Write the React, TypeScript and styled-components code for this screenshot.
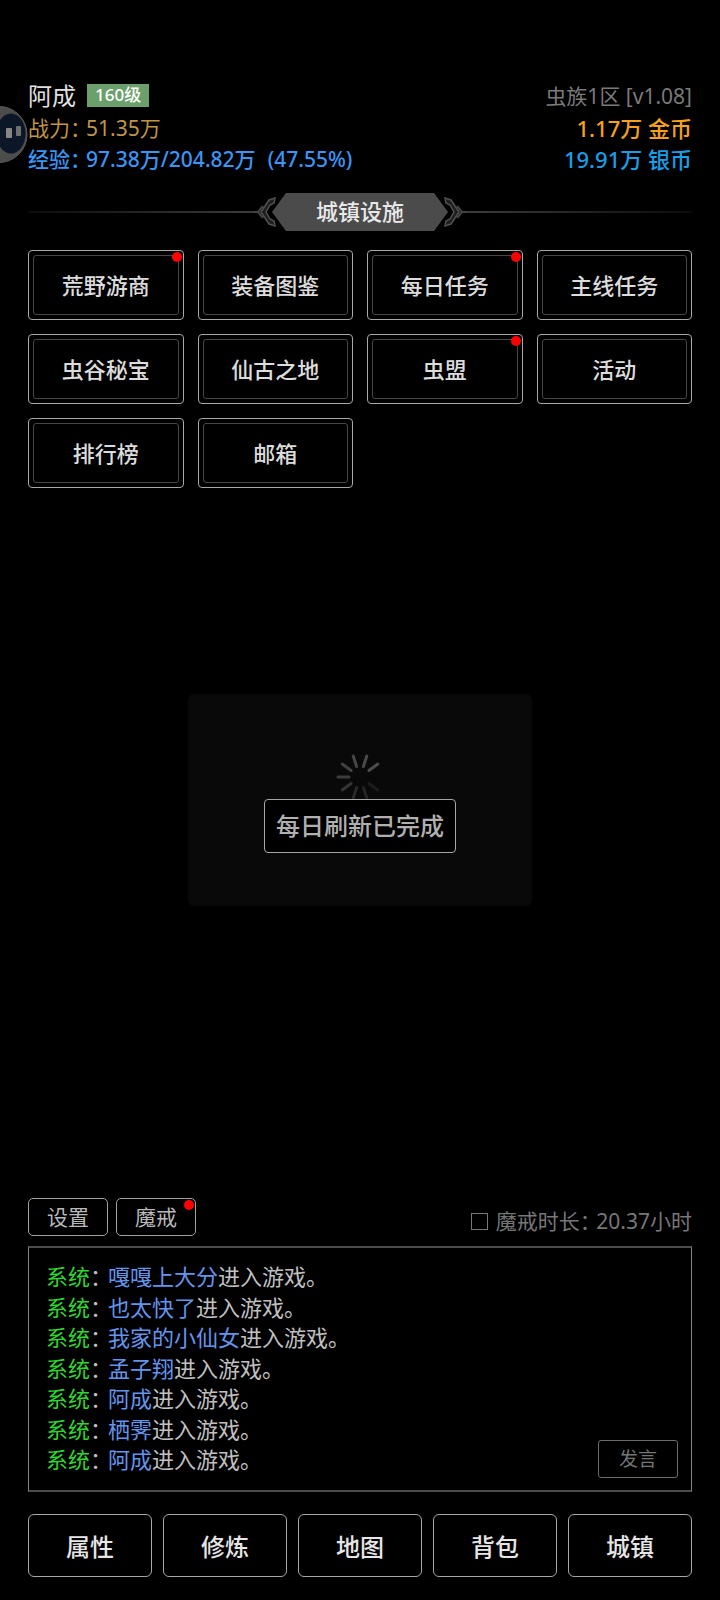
import React from "react";
import styled, { createGlobalStyle } from "styled-components";

const Global = createGlobalStyle`
  *, *::before, *::after { box-sizing: border-box; }
  body {
    margin: 0;
    background: #000;
    color: #d9d9d9;
    font-family: "Noto Sans", "Noto Sans CJK SC", sans-serif;
  }
  button { font-family: inherit; background: #000; cursor: pointer; padding: 0; }
`;

const Page = styled.div`
  min-height: 100vh;
  display: flex;
  flex-direction: column;
  padding: 79px 28px 23px;
`;

const Header = styled.header`
  display: flex;
  justify-content: space-between;
  white-space: nowrap;
`;

const Column = styled.div<{ $end?: boolean }>`
  display: flex;
  flex-direction: column;
  align-items: ${(p) => (p.$end ? "flex-end" : "flex-start")};
`;

const Line = styled.div<{ $color: string; $size?: number; $weight?: number; $tall?: boolean }>`
  display: flex;
  align-items: center;
  height: ${(p) => (p.$tall ? 33 : 31)}px;
  line-height: 30px;
  font-size: ${(p) => p.$size ?? 21}px;
  font-weight: ${(p) => p.$weight ?? 400};
  color: ${(p) => p.$color};
`;

const Level = styled.span`
  margin-left: 11px;
  padding: 0 8px;
  height: 23px;
  line-height: 22px;
  background: #6b9f6b;
  color: #fff;
  font-size: 17px;
  font-weight: 500;
`;

const StatLabel = styled.span`
  width: 58px;
  font-feature-settings: "halt";
`;

const Percent = styled.span`
  margin-left: 12px;
`;

const Title = styled.h1`
  display: flex;
  align-items: center;
  margin: 19px 0;
  height: 38px;
  font-size: 22px;
  font-weight: 500;
`;

const Rule = styled.span<{ $flip?: boolean }>`
  flex: 1;
  height: 2px;
  background: linear-gradient(${(p) => (p.$flip ? "to left" : "to right")}, #0c0c0c, #3c3c3c);
`;

const Ornament = styled.svg<{ $flip?: boolean }>`
  width: 24px;
  height: 32px;
  flex: none;
  margin: ${(p) => (p.$flip ? "0 0 0 -6px" : "0 -6px 0 0")};
  transform: ${(p) => (p.$flip ? "scaleX(-1)" : "none")};
`;

const Plate = styled.span`
  width: 176px;
  height: 38px;
  line-height: 36px;
  text-align: center;
  background: #4b4b4b;
  color: #e8e8e8;
  clip-path: polygon(14px 0, calc(100% - 14px) 0, 100% 50%, calc(100% - 14px) 100%, 14px 100%, 0 50%);
`;

const Facilities = styled.main`
  display: grid;
  grid-template-columns: repeat(4, 1fr);
  gap: 14px;
`;

const FacilityButton = styled.button`
  position: relative;
  height: 70px;
  padding: 4px;
  border: 1px solid #a8a8a8;
  border-radius: 4px;
  color: #dcdcdc;
  font-size: 22px;
  font-weight: 500;
`;

const Inner = styled.span`
  display: flex;
  height: 100%;
  padding-bottom: 2px;
  align-items: center;
  justify-content: center;
  border: 1px solid #464646;
  border-radius: 3px;
`;

const Dot = styled.i`
  position: absolute;
  top: 1px;
  right: 1px;
  width: 10px;
  height: 10px;
  border-radius: 50%;
  background: #f00;
`;

const Footer = styled.footer`
  margin-top: auto;
`;

const Tools = styled.div`
  display: flex;
  gap: 8px;
  margin-bottom: 10px;
`;

const SmallButton = styled.button<{ $dim?: boolean }>`
  position: relative;
  width: 80px;
  height: 38px;
  flex: none;
  padding-bottom: 2px;
  border: 1px solid ${(p) => (p.$dim ? "#6c6c6c" : "#a0a0a0")};
  border-radius: ${(p) => (p.$dim ? 3 : 5)}px;
  color: ${(p) => (p.$dim ? "#757575" : "#b8b8b8")};
  font-size: ${(p) => (p.$dim ? 19 : 21)}px;
`;

const Duration = styled.label`
  margin-left: auto;
  display: flex;
  align-items: center;
  height: 30px;
  align-self: flex-end;
  color: #777;
  font-size: 21px;
  line-height: 30px;
`;

const DurationName = styled.span`
  margin-right: 6px;
  font-feature-settings: "halt";
`;

const Check = styled.input`
  appearance: none;
  width: 17px;
  height: 17px;
  margin: 0 8px 0 0;
  border: 1px solid #777;
`;

const Chat = styled.section`
  display: flex;
  align-items: flex-end;
  min-height: 246px;
  padding: 13px 13px 12px 17px;
  border: solid #4d4d4d;
  border-width: 2px 1px;
  border-left-color: #858585;
  border-right-color: #858585;
`;

const Messages = styled.ul`
  flex: 1;
  align-self: stretch;
  display: flex;
  flex-direction: column;
  justify-content: space-between;
  margin: 0;
  padding: 0 0 4px;
  list-style: none;
  font-size: 22px;
  line-height: 30px;
  color: #c0c0c0;
`;

const Message = styled.li`
  display: flex;
  white-space: nowrap;
`;

const Sender = styled.span`
  width: 62px;
  font-feature-settings: "halt";
`;

const System = styled.span`
  color: #2fd62f;
`;

const Player = styled.a`
  color: #6495ed;
  text-decoration: none;
`;

const Nav = styled.nav`
  display: grid;
  grid-template-columns: repeat(5, 1fr);
  gap: 11px;
  margin-top: 22px;
`;

const NavButton = styled.button`
  height: 63px;
  border: 1px solid #a8a8a8;
  border-radius: 6px;
  color: #e6e6e6;
  font-size: 24px;
  font-weight: 500;
`;

const Overlay = styled.div`
  position: fixed;
  inset: 0;
  display: flex;
  align-items: center;
  justify-content: center;
  pointer-events: none;
`;

const Loading = styled.div`
  display: flex;
  flex-direction: column;
  align-items: center;
  width: 344px;
  height: 212px;
  padding-top: 59px;
  background: #090909;
  border-radius: 6px;
`;

const Spinner = styled.svg`
  width: 48px;
  height: 48px;
  flex: none;
`;

const Toast = styled.div`
  z-index: 1;
  margin-top: -2px;
  padding: 0 11px;
  height: 54px;
  line-height: 52px;
  background: #000;
  border: 1px solid #a6a6a6;
  border-radius: 4px;
  color: #b0b0b0;
  font-size: 24px;
  font-weight: 500;
`;

const Bubble = styled.svg`
  position: absolute;
  left: 0;
  top: 104px;
  width: 30px;
  height: 60px;
`;

const facilities = [
  { name: "荒野游商", alert: true },
  { name: "装备图鉴" },
  { name: "每日任务", alert: true },
  { name: "主线任务" },
  { name: "虫谷秘宝" },
  { name: "仙古之地" },
  { name: "虫盟", alert: true },
  { name: "活动" },
  { name: "排行榜" },
  { name: "邮箱" },
];

const players = ["嘎嘎上大分", "也太快了", "我家的小仙女", "孟子翔", "阿成", "栖霁", "阿成"];

const tabs = ["属性", "修炼", "地图", "背包", "城镇"];

const spokes = ["#090909", "#1c1c1c", "#242424", "#2a2a2a", "#343434", "#3c3c3c", "#424242", "#464646", "#4a4a4a", "#4c4c4c"];

function TitleOrnament({ flip }: { flip?: boolean }) {
  return (
    <Ornament $flip={flip} viewBox="0 0 24 32" fill="none" aria-hidden="true">
      <path d="M0 16H4M9 10L4 16L9 22" stroke="#444" strokeWidth="2" />
      <path
        d="M21 2L15 4L7 16L15 28L21 30L20 25L16 23L12 16L16 9L20 7Z"
        fill="#1e1e1e"
        stroke="#505050"
        strokeWidth="1.5"
      />
    </Ornament>
  );
}

export default function App() {
  return (
    <>
      <Global />
      <Page>
        <Header>
          <Column>
            <Line $color="#e0e0e0" $size={24} $tall>
              阿成<Level>160级</Level>
            </Line>
            <Line $color="#c09548">
              <StatLabel>战力：</StatLabel>51.35万
            </Line>
            <Line $color="#3a95f5" $weight={500}>
              <StatLabel>经验：</StatLabel>97.38万/204.82万<Percent>(47.55%)</Percent>
            </Line>
          </Column>
          <Column $end>
            <Line $color="#7a7a7a" $tall>虫族1区 [v1.08]</Line>
            <Line $color="#f5a11c" $size={22} $weight={500}>1.17万 金币</Line>
            <Line $color="#189fe8" $size={22} $weight={500}>19.91万 银币</Line>
          </Column>
        </Header>

        <Title>
          <Rule />
          <TitleOrnament />
          <Plate>城镇设施</Plate>
          <TitleOrnament flip />
          <Rule $flip />
        </Title>

        <Facilities>
          {facilities.map((f) => (
            <FacilityButton key={f.name}>
              <Inner>{f.name}</Inner>
              {f.alert && <Dot />}
            </FacilityButton>
          ))}
        </Facilities>

        <Footer>
          <Tools>
            <SmallButton>设置</SmallButton>
            <SmallButton>
              魔戒
              <Dot />
            </SmallButton>
            <Duration>
              <Check type="checkbox" />
              <DurationName>魔戒时长：</DurationName>20.37小时
            </Duration>
          </Tools>
          <Chat>
            <Messages>
              {players.map((p, i) => (
                <Message key={i}>
                  <Sender>
                    <System>系统</System>：
                  </Sender>
                  <Player href="#">{p}</Player>进入游戏。
                </Message>
              ))}
            </Messages>
            <SmallButton $dim>发言</SmallButton>
          </Chat>
          <Nav>
            {tabs.map((t) => (
              <NavButton key={t}>{t}</NavButton>
            ))}
          </Nav>
        </Footer>
      </Page>

      <Bubble viewBox="0 0 30 60" aria-hidden="true">
        <circle cx="-1" cy="30.5" r="28" fill="#4c4c4c" stroke="#5c5c5c" />
        <ellipse cx="11" cy="29.5" rx="14.5" ry="20" fill="#0b1726" />
        <rect x="6" y="24" width="6" height="10" rx="1" fill="#858585" />
        <rect x="16" y="22" width="5" height="10" rx="1" fill="#707070" />
      </Bubble>

      <Overlay>
        <Loading role="status">
          <Spinner viewBox="-24 -24 48 48" aria-hidden="true">
            {spokes.map((c, i) => (
              <line key={i} x1="11" y1="0" x2="22" y2="0" stroke={c} strokeWidth="3" strokeLinecap="round" transform={`rotate(${i * 36})`} />
            ))}
          </Spinner>
          <Toast>每日刷新已完成</Toast>
        </Loading>
      </Overlay>
    </>
  );
}
